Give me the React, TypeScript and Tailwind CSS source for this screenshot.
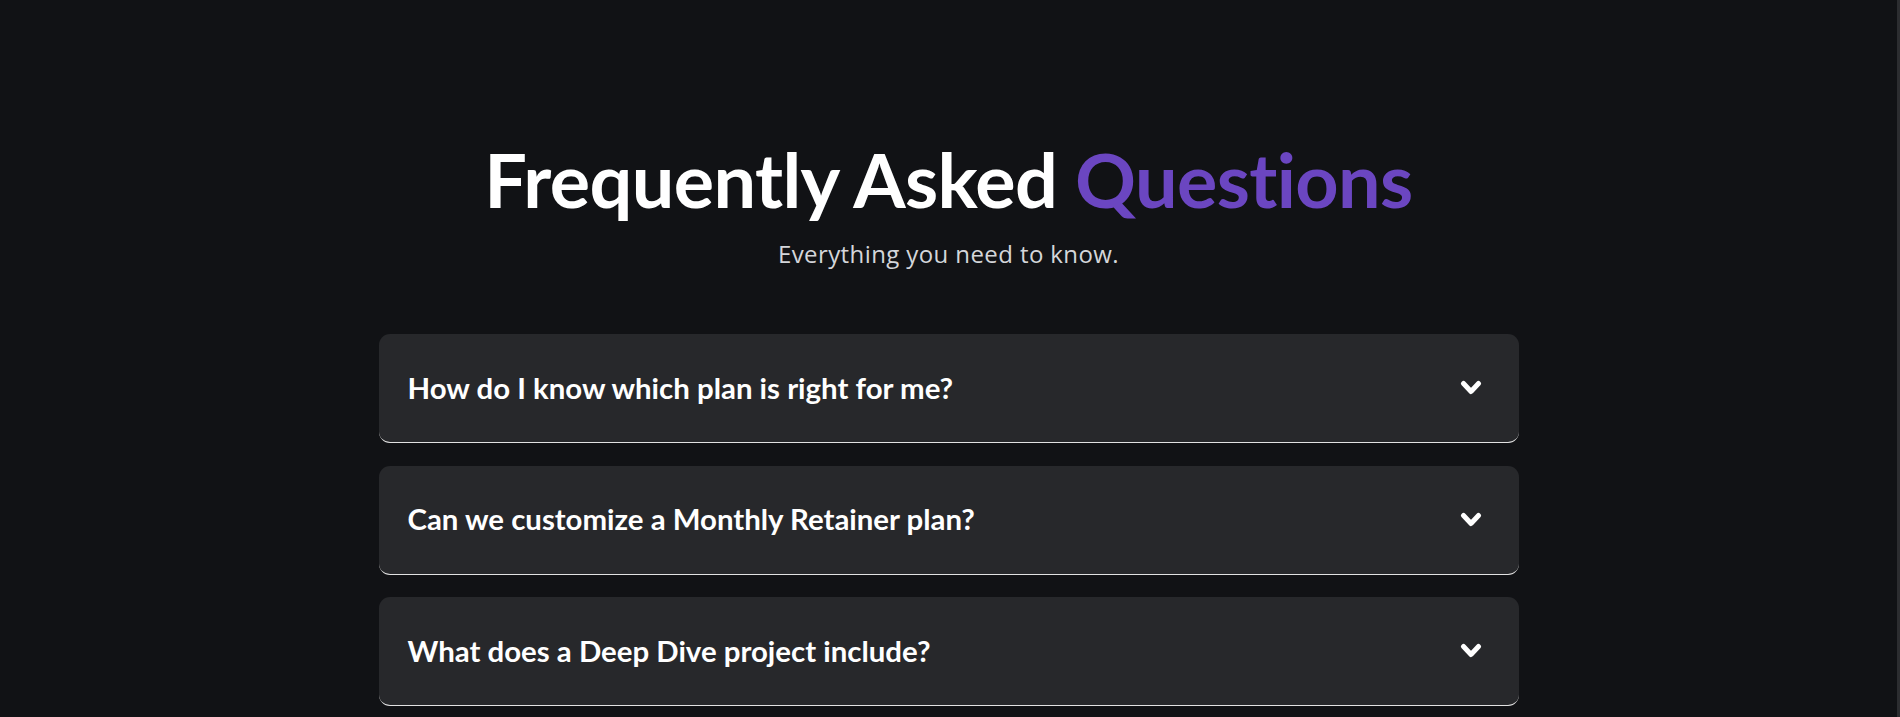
const faqs = [
  "How do I know which plan is right for me?",
  "Can we customize a Monthly Retainer plan?",
  "What does a Deep Dive project include?",
];

const Chevron = () => (
  <svg width="22" height="16" viewBox="0 0 22 16" fill="none" className="shrink-0">
    <polyline
      points="3.5,3.5 11,11.5 18.5,3.5"
      stroke="#ffffff"
      strokeWidth="5"
      strokeLinecap="round"
      strokeLinejoin="round"
    />
  </svg>
);

export default function App() {
  return (
    <div className="flex h-[717px] w-full overflow-hidden bg-[#111215]">
      <main className="flex-1 flex flex-col items-center pt-[137px]">
        {/* Header */}
        <h2 className="text-[75.5px] leading-[84px] font-bold tracking-[-0.6px] text-white font-['Lato',sans-serif]">
          Frequently Asked <span className="text-[#6b46c1]">Questions</span>
        </h2>
        <p className="mt-[17px] text-[24px] leading-[32px] tracking-[0.4px] text-[#d4d6da] font-['Open_Sans',sans-serif]">
          Everything you need to know.
        </p>

        {/* Questions */}
        <div className="mt-[64px] w-[1140px] flex flex-col gap-[22.5px]">
          {faqs.map((q) => (
            <button
              key={q}
              className="h-[109px] w-full flex items-center justify-between rounded-[11px] border-b border-[#e2e2e2] bg-[#27282b] pl-[29px] pr-[37px] text-left"
            >
              <span className="text-[29.4px] font-bold text-white font-['Lato',sans-serif]">
                {q}
              </span>
              <Chevron />
            </button>
          ))}
        </div>
      </main>
      <div className="w-[3px] bg-[#2c2d30]" />
    </div>
  );
}
